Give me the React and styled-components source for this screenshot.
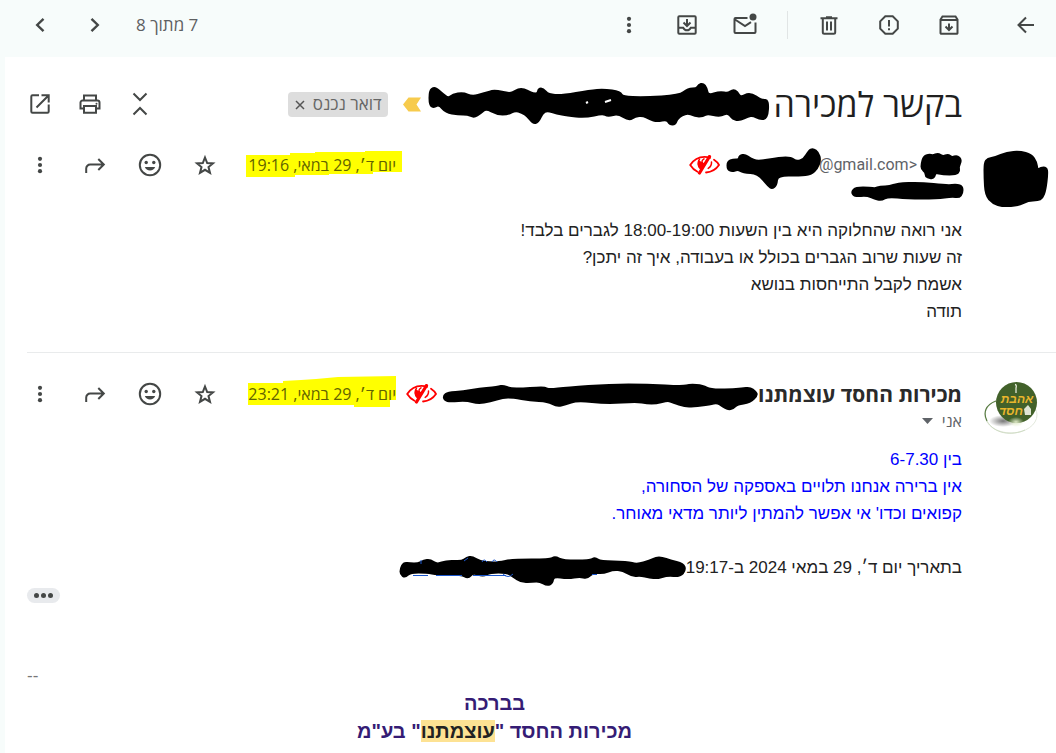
import React from "react";
import styled, { createGlobalStyle } from "styled-components";

const GlobalStyle = createGlobalStyle`
  *, *::before, *::after { box-sizing: border-box; }
  body {
    margin: 0;
    background: #f7fcfb;
    color: #222;
    font-family: "Liberation Sans", Arial, sans-serif;
  }
`;

const uiFont = `"Open Sans", "Noto Sans", "Liberation Sans", sans-serif`;

const Page = styled.div`
  direction: rtl;
  min-height: 100vh;
  display: flex;
  flex-direction: column;
`;

const Toolbar = styled.header`
  display: flex;
  align-items: center;
  height: 57px;
  padding: 0 14px 7px 24px;
`;

const ToolGroup = styled.div`
  display: flex;
  align-items: center;
  gap: ${(p) => p.$gap}px;
  margin-right: ${(p) => (p.$push ? "auto" : `${p.$start || 0}px`)};
`;

const Divider = styled.span`
  width: 1px;
  height: 28px;
  margin: 0 25px;
  background: #e1e5e5;
`;

const Counter = styled.span`
  margin-left: 9px;
  font: 17px/24px ${uiFont};
  color: #5e6062;
`;

const IconButton = styled.button`
  display: flex;
  align-items: center;
  justify-content: center;
  flex: none;
  width: 32px;
  height: 32px;
  padding: 0;
  border: 0;
  background: none;
  color: #444746;
  cursor: pointer;
  svg { width: 24px; height: 24px; display: block; }
`;

const Panel = styled.main`
  flex: 1;
  margin-left: 5px;
  padding-top: 25px;
  background: #fff;
`;

const SubjectRow = styled.div`
  display: flex;
  align-items: center;
  height: 44px;
  padding: 0 94px 0 19px;
`;

const Subject = styled.h1`
  display: flex;
  align-items: center;
  gap: 4px;
  margin: 0;
  font: 400 34px/44px ${uiFont};
  color: #1f1f1f;
  white-space: nowrap;
`;

const Chip = styled.span`
  display: flex;
  align-items: center;
  gap: 7px;
  height: 25px;
  margin-right: 15px;
  padding: 0 6px;
  border-radius: 4px;
  background: #ddd;
  font: 17px/24px ${uiFont};
  color: #666;
  white-space: nowrap;
`;

const ChipClose = styled.button`
  display: flex;
  width: 12px;
  height: 12px;
  padding: 0;
  border: 0;
  background: none;
  color: #555;
`;

const Marker = styled.svg`
  flex: none;
  width: 18px;
  height: 15px;
  margin-right: 8px;
`;

const Message = styled.article`
  display: flex;
  align-items: flex-start;
  margin-left: 22px;
  padding: ${(p) => p.$top}px 8px 27px 0;
  & + & { border-top: 1px solid #e9ebec; }
`;

const Avatar = styled.div`
  flex: none;
  width: 64px;
  margin-left: 22px;
  padding-top: 1px;
  svg { display: block; }
`;

const Content = styled.div`
  flex: 1;
  min-width: 0;
`;

const MessageHeader = styled.div`
  display: flex;
  align-items: center;
  height: 32px;
`;

const Sender = styled.h2`
  margin: 0;
  font: 700 21px/28px ${uiFont};
  color: #2a2a2a;
  white-space: nowrap;
`;

const Address = styled.span`
  direction: ltr;
  margin: 0 4px 0 0;
  font: 16px/24px Roboto, sans-serif;
  color: #5f6368;
`;

const EyeButton = styled(IconButton)`
  width: 31px;
  height: 20px;
  margin-right: ${(p) => p.$gap}px;
  svg { width: 31px; height: 20px; }
`;

const Stamp = styled.time`
  position: relative;
  z-index: 0;
  margin-right: auto;
  width: 156px;
  padding-right: 6px;
  font: 16px/24px ${uiFont};
  color: #626300;
  white-space: nowrap;
`;

const Highlight = styled.svg`
  position: absolute;
  z-index: -1;
  left: 0;
  top: -4px;
  width: 156px;
  height: 32px;
  overflow: visible;
`;

const Actions = styled.div`
  display: flex;
  gap: 23px;
  margin-right: 25px;
  margin-left: -3px;
`;

const Recipient = styled.div`
  display: flex;
  align-items: center;
  gap: 9px;
  height: 22px;
  font: 16px/22px ${uiFont};
  color: #5f6368;
`;

const Body = styled.div`
  margin-top: 14px;
  font-size: 17px;
  line-height: 27px;
  color: ${(p) => p.$color || "#222"};
  p { margin: 0; min-height: 27px; }
`;

const Quote = styled.div`
  display: flex;
  align-items: center;
  height: 27px;
  margin-top: 27px;
  font-size: 17px;
  line-height: 27px;
  white-space: nowrap;
`;

const MoreRow = styled.div`
  display: flex;
  direction: ltr;
  margin-top: 7px;
`;

const MorePill = styled.button`
  display: flex;
  align-items: center;
  justify-content: center;
  gap: 2px;
  width: 33px;
  height: 15px;
  padding: 0;
  border: 0;
  border-radius: 8px;
  background: #e8eaed;
`;

const Dot = styled.span`
  width: 5px;
  height: 5px;
  border-radius: 50%;
  background: #444746;
`;

const Signature = styled.footer`
  margin-top: 59px;
  font-weight: 700;
  font-size: 20px;
  line-height: 28px;
  text-align: center;
  color: #351c75;
  p { margin: 0; }
`;

const Dashes = styled.div`
  direction: ltr;
  text-align: left;
  font-weight: 400;
  font-size: 17px;
  line-height: 27px;
  color: #777;
`;

const Mark = styled.mark`
  background: #fde293;
  color: #222;
`;

const InkSvg = styled.svg`
  position: relative;
  display: block;
  flex: none;
  overflow: visible;
  margin-right: ${(p) => p.$gap || 0}px;
`;

// Rounds a polygon's corners the way a soft round brush would.
const brushPath = (points) => {
  const pts = points.split(" ").map((p) => p.split(",").map(Number));
  const mid = (a, b) => `${(a[0] + b[0]) / 2} ${(a[1] + b[1]) / 2}`;
  const start = mid(pts[pts.length - 1], pts[0]);
  const curves = pts.map((p, i) => `Q${p[0]} ${p[1]} ${mid(p, pts[(i + 1) % pts.length])}`);
  return `M${start}${curves.join("")}Z`;
};

const Ink = ({ box, points, gap, children }) => {
  const [x, y, w, h] = box;
  return (
    <InkSvg $gap={gap} width={w} height={h} viewBox={`${x} ${y} ${w} ${h}`} aria-hidden="true">
      <path d={brushPath(points)} fill="#000" stroke="#000" strokeWidth="3" strokeLinejoin="round" />
      {children}
    </InkSvg>
  );
};

const ink = {
  subject:
    "430,91 434,88 438,90 448,99 453,95 463,93 472,97 484,94 490,92 494,91 502,92 510,94 516,91 521,89 527,91 533,94 538,94 539,89 543,89 548,95 562,96 590,91 604,90 620,92 622,97 643,98 680,96 688,89 697,89 699,85 703,84 706,88 708,96 720,92 728,94 733,90 737,92 740,98 750,93 762,101 768,100 767,118 760,119 753,115 748,116 740,120 733,119 728,112 720,116 707,113 703,116 695,116 687,112 677,118 675,124 670,124 667,119 657,121 650,119 643,115 635,116 629,120 618,113 608,116 603,113 585,117 567,115 557,113 547,110 542,113 538,122 533,123 528,116 522,112 515,110 508,114 497,114 486,108 480,113 474,117 468,114 458,114 446,112 439,104 434,107 430,105",
  address:
    "728,162 733,160 739,160 740,156 745,155 750,159 758,162 780,158 791,158 796,162 804,160 809,151 813,149 818,153 820,160 817,168 811,174 800,175 777,175 776,185 772,188 769,186 758,173 743,172 738,169 732,171 728,169",
  name:
    "922,165 924,158 929,156 933,157 938,155 943,158 948,156 952,159 957,157 961,161 958,168 959,172 956,175 943,175 935,173 934,178 930,179 926,177 926,173 922,170",
  recipient:
    "852,192 856,188 870,188 875,189 880,187 890,187 897,184 920,183 947,186 957,185 962,187 962,193 959,197 952,196 937,198 907,198 888,196 881,200 875,198 867,195 855,196",
  avatar:
    "985,163 988,159 995,158 1007,153 1020,152 1031,155 1036,162 1037,171 1041,168 1046,168 1047,173 1045,190 1042,198 1038,200 1028,200 1019,205 1003,206 993,203 986,195 985,177",
  sender:
    "444,396 448,393 463,392 480,389 493,388 499,387 503,386 510,389 523,389 537,388 545,388 549,390 567,388 610,385 647,385 683,387 690,385 703,386 710,390 730,390 742,389 750,388 755,392 757,395 750,402 737,404 733,408 728,409 723,406 717,402 710,404 693,406 685,406 673,402 668,400 656,403 647,403 637,401 607,403 577,400 565,404 557,406 548,401 530,400 513,397 503,397 490,401 478,403 467,400 450,401 445,400",
  quote:
    "401,569 404,563 410,564 418,564 424,561 430,560 437,565 447,561 462,562 467,558 472,557 480,562 490,563 498,563 513,560 550,560 555,557 563,561 590,561 595,558 600,562 627,562 637,565 650,561 656,558 662,558 670,561 683,564 685,570 680,576 667,575 657,578 650,577 640,575 633,576 623,570 613,569 603,573 593,572 587,578 580,576 568,578 553,576 552,583 547,585 540,581 533,581 522,582 513,576 507,572 490,572 483,576 473,572 468,578 462,574 437,574 427,572 410,572 405,577 401,574",
};

const Stroke = ({ d, w = 2, children }) => (
  <svg viewBox="0 0 24 24" fill="none" stroke="currentColor" strokeWidth={w} aria-hidden="true">
    <path d={d} />
    {children}
  </svg>
);

const icons = {
  back: <Stroke d="M20 12H5M12 4.500L4.500 12L12 19.500" />,
  archive: (
    <Stroke d="M3.500 6.500V20a.8.8 0 0 0 .8.8H19.700a.8.8 0 0 0 .8-.8V6.500L18.500 3.500H5.500L3.500 6.500ZM3.500 7H20.500M12 10.500V17M8.500 13.500L12 17L15.500 13.500" />
  ),
  spam: (
    <Stroke d="M8.300 3.200H15.700L20.800 8.300V15.700L15.700 20.800H8.300L3.200 15.700V8.300Z">
      <path d="M12 7V13.500M12 15.300V17.300" />
    </Stroke>
  ),
  trash: <Stroke d="M3.500 5.200H20.500M9 4.200H15M5.800 5.500V19.200a1.500 1.500 0 0 0 1.500 1.500H16.700a1.500 1.500 0 0 0 1.500-1.500V5.500M10 8.500V17.500M14 8.500V17.500" />,
  unread: (
    <Stroke d="M14.500 5H2.500A1 1 0 0 0 1.500 6V19A1 1 0 0 0 2.500 20H21.500A1 1 0 0 0 22.500 19V9.500M2 6.500L12 13L18 9.200">
      <circle cx="20" cy="4" r="3.500" fill="currentColor" stroke="none" />
    </Stroke>
  ),
  move: (
    <Stroke d="M4.300 3.300H19.700a1 1 0 0 1 1 1V19.700a1 1 0 0 1-1 1H4.300a1 1 0 0 1-1-1V4.300a1 1 0 0 1 1-1ZM3.500 14.800H8.200C9 16.500 10.200 17.300 12 17.300S15 16.500 15.800 14.800H20.500M12 6V12.500M8.500 9.500L12 13L15.500 9.500" />
  ),
  more: (
    <svg viewBox="0 0 24 24" fill="currentColor" aria-hidden="true">
      <circle cx="12" cy="5.800" r="2.100" />
      <circle cx="12" cy="12" r="2.100" />
      <circle cx="12" cy="18.200" r="2.100" />
    </svg>
  ),
  next: <Stroke w={2.4} d="M8.500 5.800L14.800 12L8.500 18.200" />,
  prev: <Stroke w={2.4} d="M15.500 5.800L9.200 12L15.500 18.200" />,
  open: <Stroke d="M11 3.300H4.500A1.200 1.200 0 0 0 3.300 4.500V19.500A1.200 1.200 0 0 0 4.500 20.700H19.500A1.200 1.200 0 0 0 20.700 19.500V12.500M13.500 3.300H20.700V10.500M20.500 3.500L8.500 15.500" />,
  print: (
    <Stroke d="M6 16.500H2.500V10.500A2 2 0 0 1 4.500 8.500H19.500A2 2 0 0 1 21.500 10.500V16.500H18M6 8.500V3.500H18V8.500M6 14H18V20.800H6Z">
      <circle cx="18.500" cy="11.800" r="1" fill="currentColor" stroke="none" />
    </Stroke>
  ),
  collapse: <Stroke d="M5.500 1.500L12 8L18.500 1.500M5.500 22.500L12 16L18.500 22.500" />,
  forward: <Stroke d="M3.200 20V15.500A4 4 0 0 1 7.200 11.500H20.500M15.300 6L20.800 11.500L15.300 17" />,
  smile: (
    <Stroke d="M12 1.800A10.200 10.200 0 1 1 12 22.200A10.200 10.200 0 1 1 12 1.800Z">
      <g fill="currentColor" stroke="none">
        <circle cx="8.200" cy="9.500" r="1.700" />
        <circle cx="15.800" cy="9.500" r="1.700" />
        <path d="M6.800 14H17.200C16.300 16.300 14.500 17.500 12 17.500S7.700 16.300 6.800 14Z" />
      </g>
    </Stroke>
  ),
  star: <Stroke d="M12 4.500L14.200 10L20 10.400L15.500 14.100L17 19.900L12 16.800L7 19.900L8.500 14.100L4 10.400L9.800 10Z" />,
  eye: (
    <svg viewBox="0 0 31 20" fill="none" stroke="#f00" strokeWidth="1.800" strokeLinecap="round" aria-hidden="true">
      <path d="M1.200 10C5 4 10 1.800 15.500 1.800C18 1.800 19.500 2.200 21 2.800M1.200 10C3.200 13.200 5.500 15.300 8.500 16.800M25 4.800C27.300 6.300 29 8 30 10C27 14.500 22.500 17 17 17.500" />
      <path d="M9.200 5C8 9 8.500 12.500 11.500 14.500L18.500 5.500C16.500 8.500 14 8.500 12.800 7Z" fill="#f00" stroke="none" />
      <path d="M10.500 4.200C8.800 7 8.600 11 11.800 13.500M15 3.800C13 5 12.500 6.800 13.500 7.800M22.500 7C22.700 9.500 21.500 12 19.200 13.400" strokeWidth="1.500" />
      <path d="M20.500 1.500L10.500 18" strokeWidth="3.200" />
    </svg>
  ),
};

const Action = ({ icon, label }) => (
  <IconButton type="button" aria-label={label} title={label}>{icons[icon]}</IconButton>
);

const MessageActions = () => (
  <Actions>
    <Action icon="star" label="סימון בכוכב" />
    <Action icon="smile" label="הוספת תגובה" />
    <Action icon="forward" label="העברה" />
    <Action icon="more" label="עוד" />
  </Actions>
);

const DateStamp = ({ dateTime, shape, children }) => (
  <Stamp dateTime={dateTime}>
    <Highlight viewBox="0 0 156 32" aria-hidden="true">
      <polygon points={shape} fill="#ff0" />
    </Highlight>
    {children}
  </Stamp>
);

const Logo = () => (
  <svg width="64" height="56" viewBox="984 380 64 56" role="img" aria-label="אהבת חסד">
    <defs>
      <radialGradient id="shade">
        <stop offset="0" stopColor="#777" />
        <stop offset="1" stopColor="#777" stopOpacity="0" />
      </radialGradient>
      <radialGradient id="glow">
        <stop offset="0" stopColor="#dfe9c8" />
        <stop offset="1" stopColor="#dfe9c8" stopOpacity="0" />
      </radialGradient>
    </defs>
    <ellipse cx="1011" cy="416" rx="26" ry="18" fill="#fff" stroke="#e3e9dd" strokeWidth="1" />
    <path d="M996 402C985 406 983 414 987 422" fill="none" stroke="#587b42" strokeWidth="1.200" />
    <path d="M987 422C994 435 1012 437 1025 431" fill="none" stroke="#cfdcc4" strokeWidth="1" />
    <ellipse cx="1003" cy="422" rx="14" ry="6" fill="url(#shade)" />
    <circle cx="1016.500" cy="403.500" r="20.500" fill="#42612a" />
    <ellipse cx="1016" cy="423" rx="8" ry="5" fill="url(#glow)" />
    <path d="M1015 385.500Q1017 386 1016 389V394" fill="none" stroke="#e5ead8" strokeWidth="1.300" />
    <g fill="#e9b62c" fontFamily="Liberation Sans, sans-serif" fontWeight="700" fontStyle="italic" textAnchor="middle">
      <text x="1017" y="404" fontSize="12">אהבת</text>
      <text x="1011" y="416" fontSize="12">חסד</text>
    </g>
    <path d="M1024 410L1028 406L1031 410V416H1025Z" fill="#dfe4d4" />
  </svg>
);

export default function App() {
  return (
    <Page lang="he">
      <GlobalStyle />
      <Toolbar>
        <Action icon="back" label="חזרה" />
        <ToolGroup $gap={28} $start={45}>
          <Action icon="archive" label="העברה לארכיון" />
          <Action icon="spam" label="דיווח על ספאם" />
          <Action icon="trash" label="מחיקה" />
        </ToolGroup>
        <Divider />
        <ToolGroup $gap={26} $start={1}>
          <Action icon="unread" label="סימון כלא נקרא" />
          <Action icon="move" label="העברה אל" />
          <Action icon="more" label="עוד" />
        </ToolGroup>
        <ToolGroup $gap={16} $push>
          <Counter>7 מתוך 8</Counter>
          <ToolGroup $gap={23}>
            <Action icon="next" label="הקודם" />
            <Action icon="prev" label="הבא" />
          </ToolGroup>
        </ToolGroup>
      </Toolbar>

      <Panel>
        <SubjectRow>
          <Subject>
            בקשר למכירה
            <Ink box={[429, 83, 341, 42]} points={ink.subject}>
              <path d="M605 102l6-2M586 103l2-1" stroke="#fff" strokeWidth="2" />
            </Ink>
          </Subject>
          <Marker viewBox="0 0 18 15" aria-hidden="true">
            <path d="M5.500 0.500H18L13.500 7.500L18 14.500H5.500L0 7.500Z" fill="#f7cb4d" />
          </Marker>
          <Chip>
            דואר נכנס
            <ChipClose type="button" aria-label="הסרת התווית">
              <svg width="12" height="12" viewBox="0 0 12 12" stroke="currentColor" strokeWidth="1.500">
                <path d="M2 3L10 11M10 3L2 11" />
              </svg>
            </ChipClose>
          </Chip>
          <ToolGroup $gap={18} $push>
            <Action icon="collapse" label="כיווץ הכול" />
            <Action icon="print" label="הדפסה" />
            <Action icon="open" label="בחלון חדש" />
          </ToolGroup>
        </SubjectRow>

        <Message $top={23}>
          <Avatar>
            <Ink box={[984, 150, 64, 58]} points={ink.avatar} />
          </Avatar>
          <Content>
            <MessageHeader>
              <Ink box={[921, 150, 41, 32]} points={ink.name} />
              <Address>@gmail.com&gt;</Address>
              <Ink box={[727, 149, 92, 32]} points={ink.address} />
              <EyeButton type="button" aria-label="לא במעקב" $gap={7}>{icons.eye}</EyeButton>
              <DateStamp
                dateTime="2024-05-29T19:16"
                shape="0,6 44,6 44,4 69,4 69,3 119,3 119,2 156,2 156,23 127,23 127,25 83,25 83,26 49,26 49,28 0,28"
              >
                יום ד׳, 29 במאי, 19:16
              </DateStamp>
              <MessageActions />
            </MessageHeader>
            <Recipient>
              <Ink box={[851, 181, 111, 22]} points={ink.recipient} />
            </Recipient>
            <Body>
              <p>אני רואה שהחלוקה היא בין השעות 18:00-19:00 לגברים בלבד!</p>
              <p>זה שעות שרוב הגברים בכולל או בעבודה, איך זה יתכן?</p>
              <p>אשמח לקבל התייחסות בנושא</p>
              <p>תודה</p>
            </Body>
          </Content>
        </Message>

        <Message $top={25}>
          <Avatar>
            <Logo />
          </Avatar>
          <Content>
            <MessageHeader>
              <Sender>מכירות החסד עוצמתנו</Sender>
              <Ink box={[443, 378, 315, 32]} points={ink.sender} />
              <EyeButton type="button" aria-label="לא במעקב" $gap={6}>{icons.eye}</EyeButton>
              <DateStamp
                dateTime="2024-05-29T23:21"
                shape="2,5 37,5 37,3 55,2 70,1 92,-1 150,-2 150,22 144,22 144,29 108,29 108,27 2,27"
              >
                יום ד׳, 29 במאי, 23:21
              </DateStamp>
              <MessageActions />
            </MessageHeader>
            <Recipient>
              אני
              <svg width="11" height="6" viewBox="0 0 11 6" aria-hidden="true">
                <path d="M0 0H11L5.500 6Z" fill="#5f6368" />
              </svg>
            </Recipient>
            <Body $color="#00f">
              <p>בין 6-7.30</p>
              <p>אין ברירה אנחנו תלויים באספקה של הסחורה,</p>
              <p>קפואים וכדו' אי אפשר להמתין ליותר מדאי מאוחר.</p>
            </Body>
            <Quote>
              בתאריך יום ד׳, 29 במאי 2024 ב-19:17
              <Ink box={[400, 554, 286, 27]} points={ink.quote}>
                <path
                  d="M413 575.500H428M436 575.500H462M473 575.500H506M503 574Q508 579 513 574M592 574.500H597M421 560V564M464 561L468 558M482 562Q484 558 487 562M492 562Q494 558 497 562"
                  fill="none"
                  stroke="#1a56cc"
                  strokeWidth="1"
                />
              </Ink>
            </Quote>
            <MoreRow>
              <MorePill type="button" aria-label="הצגת תוכן מקוצר">
                <Dot />
                <Dot />
                <Dot />
              </MorePill>
            </MoreRow>
            <Signature>
              <Dashes>--</Dashes>
              <p>בברכה</p>
              <p>מכירות החסד "<Mark>עוצמתנו</Mark>" בע"מ</p>
            </Signature>
          </Content>
        </Message>
      </Panel>
    </Page>
  );
}
